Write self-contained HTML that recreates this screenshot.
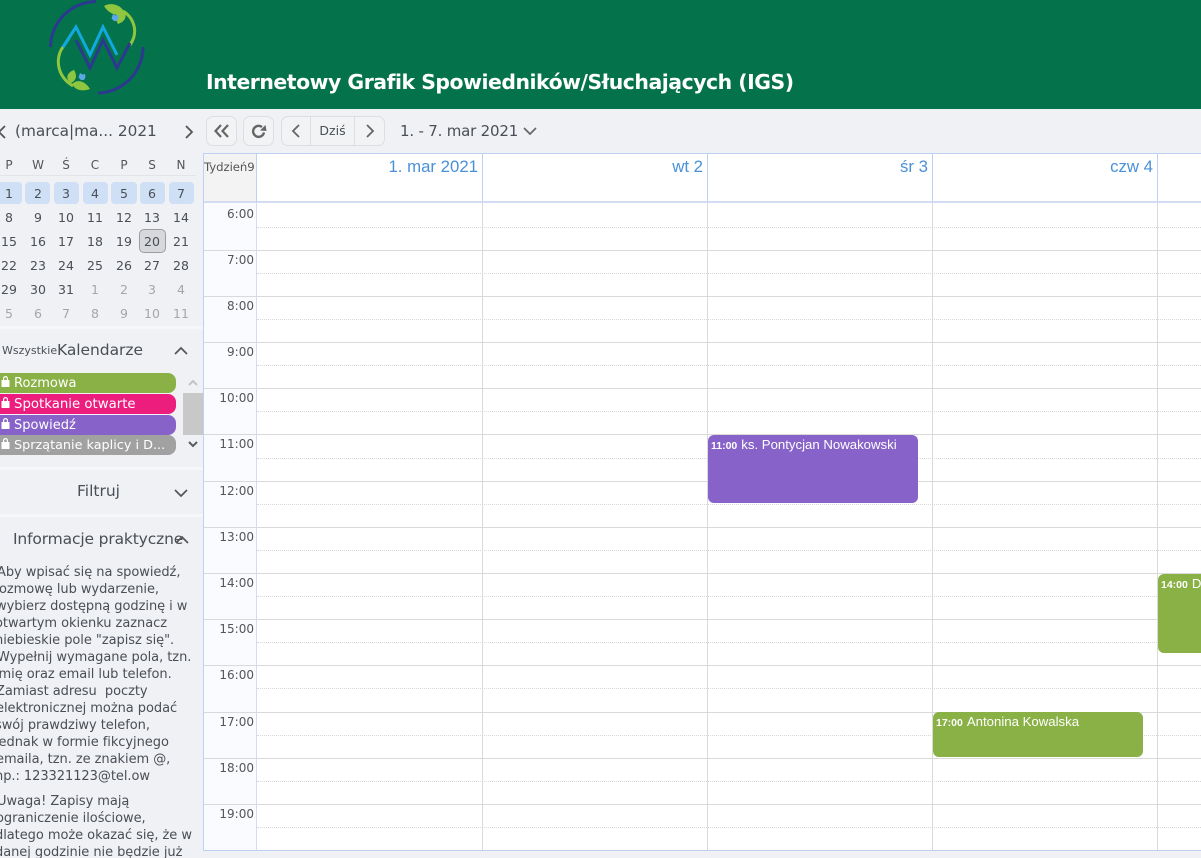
<!DOCTYPE html>
<html lang="pl"><head><meta charset="utf-8"><title>IGS</title>
<style>
html,body{margin:0;padding:0;width:1201px;height:858px;overflow:hidden;background:#eff1f5}
body{position:relative;font-family:"DejaVu Sans","Liberation Sans",sans-serif;color:#4a4f55}
div,span{position:absolute;white-space:nowrap;box-sizing:border-box}
#hd{left:0;top:0;width:1201px;height:109px;background:#04724a}
#ttl{left:206px;top:67px;font-size:20.4px;line-height:30px;font-weight:bold;color:#fff;letter-spacing:-.47px;font-family:"DejaVu Sans",sans-serif}
.wd{top:157px;width:28px;text-align:center;font-size:12px;line-height:16px;color:#555}
.chip{top:182px;height:22px;background:#cfdff6;border-radius:4px}
.d{width:28px;text-align:center;font-size:12.5px;line-height:16px;margin-top:1px;color:#4a4f55}
.m{color:#a3a6aa}
.c{left:-8px;width:184px;height:20px;border-radius:8px;color:#fff;font-size:13px;line-height:22px;padding-left:22px}
.sep{left:0;width:203px;height:3px;background:#f6f7f9}
.sec{font-size:15.5px;line-height:20px;color:#4a4f55}
.p{left:-3px;font-size:13px;line-height:17px;margin-top:1px;color:#4a4f55;letter-spacing:-.05px}
.btn{top:116px;height:30px;background:#f2f3f5;border:1px solid #dcdee2;border-radius:7px}
.hl{left:204px;width:997px;height:1px;background:#d9d9d9}
.dl{left:257px;width:944px;height:0;border-top:1px dotted #d8d8d8}
.vl{top:203px;width:1px;height:647px;background:#d9d9d9}
.hvl{top:154px;width:1px;height:48px;background:#bfd0f5}
.dh{top:157px;font-family:"Liberation Sans",sans-serif;font-size:16.8px;line-height:20px;color:#4a90d9;text-align:right}
.t{left:204px;width:50px;text-align:right;font-size:12px;line-height:16px;margin-top:1px;color:#555}
.ev{border-radius:6px;color:#fff;font-family:"Liberation Sans",sans-serif;font-size:13.2px;line-height:15px;padding:2px 3px;overflow:hidden}
.ev b{font-size:10.5px;margin-right:4px}
</style></head><body>

<div id="hd">
<svg width="160" height="100" viewBox="0 0 160 100" style="position:absolute;left:0;top:0" fill="none">
<path d="M96 1.500A46 46 0 0 0 50.500 47" stroke="#2b3a8f" stroke-width="3"/>
<path d="M143 47A46 46 0 0 1 98 93" stroke="#2b3a8f" stroke-width="3"/>
<path d="M123 11C134 18 139 32 130 45" stroke="#8ec63f" stroke-width="3"/>
<path d="M63 47C56 56 55 75 73 86" stroke="#8ec63f" stroke-width="3"/>
<path d="M63 47L69 38" stroke="#3fb8a8" stroke-width="3"/>
<path d="M104 6C110 2 122 4 125 14C116 17 108 13 104 6Z" fill="#8ec63f"/>
<path d="M118 24C113 16 118 10 125 12C127 18 124 22 118 24Z" fill="#8ec63f"/>
<path d="M72 84C78 78 86 82 90 89C82 92 75 90 72 84Z" fill="#8ec63f"/>
<path d="M71 83C64 78 68 72 74 70C77 75 77 80 71 83Z" fill="#8ec63f"/>
<path d="M113 14l2.500 1.500 2.500-.5 .5 3-1.500 3h-3l-2.500-2.500z" fill="#5aa9e6"/>
<path d="M80 73l2.500 1.500 2.500-.5 .5 3-1.500 3h-3l-2.500-2.500z" fill="#5aa9e6"/>
<path d="M76 40L90 68L103 40L117 68L130 43" stroke="#2b3a8f" stroke-width="3"/>
<path d="M63 47L76 27L90 55L103 27L117 55" stroke="#12a9e0" stroke-width="3"/>
</svg>
<div id="ttl">Internetowy Grafik Spowiedników/Słuchających (IGS)</div>
</div>

<!-- mini calendar -->
<svg width="10" height="14" style="position:absolute;left:-3px;top:125px" fill="none" stroke="#555" stroke-width="1.800"><path d="M8 1L2 7L8 13"/></svg>
<div style="left:15px;top:120px;font-size:15.300px;line-height:22px;color:#4a4f55">(marca|ma... 2021</div>
<svg width="10" height="14" style="position:absolute;left:184px;top:125px" fill="none" stroke="#555" stroke-width="1.800"><path d="M2 1L8 7L2 13"/></svg>

<div class="wd" style="left:-5px">P</div><div class="wd" style="left:24px">W</div><div class="wd" style="left:52px">Ś</div><div class="wd" style="left:81px">C</div><div class="wd" style="left:110px">P</div><div class="wd" style="left:138px">S</div><div class="wd" style="left:167px">N</div>
<div style="left:0;top:175px;width:196px;height:1px;background:#e2e4e7"></div>

<div class="chip" style="left:-4px;width:26px"></div><div class="chip" style="left:25px;width:25px"></div><div class="chip" style="left:54px;width:25px"></div><div class="chip" style="left:83px;width:25px"></div><div class="chip" style="left:111px;width:26px"></div><div class="chip" style="left:140px;width:25px"></div><div class="chip" style="left:169px;width:25px"></div>
<div style="left:139px;top:229px;width:27px;height:24px;background:#d6d8db;border:1px solid #9a9ea3;border-radius:5px"></div>

<div class="d" style="left:-5px;top:185px">1</div><div class="d" style="left:24px;top:185px">2</div><div class="d" style="left:52px;top:185px">3</div><div class="d" style="left:81px;top:185px">4</div><div class="d" style="left:110px;top:185px">5</div><div class="d" style="left:138px;top:185px">6</div><div class="d" style="left:167px;top:185px">7</div>
<div class="d" style="left:-5px;top:209px">8</div><div class="d" style="left:24px;top:209px">9</div><div class="d" style="left:52px;top:209px">10</div><div class="d" style="left:81px;top:209px">11</div><div class="d" style="left:110px;top:209px">12</div><div class="d" style="left:138px;top:209px">13</div><div class="d" style="left:167px;top:209px">14</div>
<div class="d" style="left:-5px;top:233px">15</div><div class="d" style="left:24px;top:233px">16</div><div class="d" style="left:52px;top:233px">17</div><div class="d" style="left:81px;top:233px">18</div><div class="d" style="left:110px;top:233px">19</div><div class="d" style="left:138px;top:233px">20</div><div class="d" style="left:167px;top:233px">21</div>
<div class="d" style="left:-5px;top:257px">22</div><div class="d" style="left:24px;top:257px">23</div><div class="d" style="left:52px;top:257px">24</div><div class="d" style="left:81px;top:257px">25</div><div class="d" style="left:110px;top:257px">26</div><div class="d" style="left:138px;top:257px">27</div><div class="d" style="left:167px;top:257px">28</div>
<div class="d" style="left:-5px;top:281px">29</div><div class="d" style="left:24px;top:281px">30</div><div class="d" style="left:52px;top:281px">31</div><div class="d m" style="left:81px;top:281px">1</div><div class="d m" style="left:110px;top:281px">2</div><div class="d m" style="left:138px;top:281px">3</div><div class="d m" style="left:167px;top:281px">4</div>
<div class="d m" style="left:-5px;top:305px">5</div><div class="d m" style="left:24px;top:305px">6</div><div class="d m" style="left:52px;top:305px">7</div><div class="d m" style="left:81px;top:305px">8</div><div class="d m" style="left:110px;top:305px">9</div><div class="d m" style="left:138px;top:305px">10</div><div class="d m" style="left:167px;top:305px">11</div>

<div class="sep" style="top:326px"></div>

<!-- Kalendarze -->
<div style="left:2px;top:343px;font-size:11px;line-height:15px;color:#4a4f55">Wszystkie</div>
<div class="sec" style="left:57px;top:340px;letter-spacing:-.05px">Kalendarze</div>
<svg width="14" height="9" style="position:absolute;left:174px;top:346px" fill="none" stroke="#555" stroke-width="1.700"><path d="M1 8L7 2L13 8"/></svg>

<div class="c" style="top:373px;background:#8ab146">Rozmowa</div>
<div class="c" style="top:394px;background:#ec1d7d;font-size:13.3px">Spotkanie otwarte</div>
<div class="c" style="top:415px;background:#8763c9">Spowiedź</div>
<div class="c" style="top:435px;background:#a1a1a1;font-size:12.8px">Sprzątanie kaplicy i D...</div>
<svg width="12" height="84" viewBox="0 0 12 84" style="position:absolute;left:0;top:374px" fill="#fff">
<path d="M1.500 6h8v7h-8zM3 6V4.500a2.500 2.500 0 0 1 5 0V6H6.800V4.500a1.300 1.300 0 0 0-2.600 0V6z"/>
<path d="M1.500 27h8v7h-8zM3 27V25.500a2.500 2.500 0 0 1 5 0V27H6.800V25.500a1.300 1.300 0 0 0-2.600 0V27z"/>
<path d="M1.500 48h8v7h-8zM3 48V46.500a2.500 2.500 0 0 1 5 0V48H6.800V46.500a1.300 1.300 0 0 0-2.600 0V48z"/>
<path d="M1.500 68h8v7h-8zM3 68V66.500a2.500 2.500 0 0 1 5 0V68H6.800V66.500a1.300 1.300 0 0 0-2.600 0V68z"/>
</svg>
<div style="left:183px;top:393px;width:20px;height:42px;background:#c8c8c8"></div>
<svg width="10" height="7" style="position:absolute;left:188px;top:379px" fill="none" stroke="#c2c4c6" stroke-width="2"><path d="M1 6L5 2L9 6"/></svg>
<svg width="10" height="7" style="position:absolute;left:188px;top:441px" fill="none" stroke="#5a5d60" stroke-width="2"><path d="M1 1L5 5L9 1"/></svg>

<div class="sep" style="top:467px"></div>
<div class="sec" style="left:77px;top:481px">Filtruj</div>
<svg width="14" height="9" style="position:absolute;left:174px;top:489px" fill="none" stroke="#555" stroke-width="1.700"><path d="M1 1L7 7L13 1"/></svg>
<div class="sep" style="top:514px"></div>
<div class="sec" style="left:13px;top:529px;letter-spacing:-.15px">Informacje praktyczne</div>
<svg width="14" height="9" style="position:absolute;left:175px;top:535px" fill="none" stroke="#555" stroke-width="1.700"><path d="M1 8L7 2L13 8"/></svg>

<div class="p" style="top:563px">Aby wpisać się na spowiedź,</div>
<div class="p" style="top:580px;left:-6px">rozmowę lub wydarzenie,</div>
<div class="p" style="top:597px;left:-4px">wybierz dostępną godzinę i w</div>
<div class="p" style="top:614px;left:-5px">otwartym okienku zaznacz</div>
<div class="p" style="top:631px;left:-5px">niebieskie pole "zapisz się".</div>
<div class="p" style="top:648px;left:-3px">Wypełnij wymagane pola, tzn.</div>
<div class="p" style="top:665px;left:-5px">imię oraz email lub telefon.</div>
<div class="p" style="top:682px;left:-4px">Zamiast adresu&nbsp; poczty</div>
<div class="p" style="top:699px;left:-4px">elektronicznej można podać</div>
<div class="p" style="top:716px;left:-5px">swój prawdziwy telefon,</div>
<div class="p" style="top:733px;left:-5px">jednak w formie fikcyjnego</div>
<div class="p" style="top:750px;left:-4px">emaila, tzn. ze znakiem @,</div>
<div class="p" style="top:767px;left:-5px">np.: 123321123@tel.ow</div>
<div class="p" style="top:792px;left:-3px">Uwaga! Zapisy mają</div>
<div class="p" style="top:809px;left:-4px">ograniczenie ilościowe,</div>
<div class="p" style="top:826px;left:-5px">dlatego może okazać się, że w</div>
<div class="p" style="top:843px;left:-5px">danej godzinie nie będzie już</div>

<!-- toolbar -->
<div class="btn" style="left:206px;width:31px"></div>
<svg width="16" height="14" style="position:absolute;left:214px;top:124px" fill="none" stroke="#666" stroke-width="2.200"><path d="M7 1L1.500 7L7 13M14 1L8.500 7L14 13"/></svg>
<div class="btn" style="left:243px;width:31px"></div>
<svg width="16" height="16" style="position:absolute;left:251px;top:123px" fill="none" stroke="#666" stroke-width="2.400"><path d="M13 9.500A5.500 5.500 0 1 1 11 4"/><path d="M9 7.500L15.500 8L14.500 2Z" fill="#666" stroke="none"/></svg>
<div class="btn" style="left:281px;width:104px"></div>
<div style="left:310px;top:116px;width:1px;height:30px;background:#dcdee2"></div>
<div style="left:354px;top:116px;width:1px;height:30px;background:#dcdee2"></div>
<svg width="10" height="14" style="position:absolute;left:291px;top:124px" fill="none" stroke="#666" stroke-width="1.800"><path d="M8 1L2 7L8 13"/></svg>
<div style="left:311px;top:122px;width:43px;text-align:center;font-size:12.500px;line-height:18px;color:#4a4f55">Dziś</div>
<svg width="10" height="14" style="position:absolute;left:365px;top:124px" fill="none" stroke="#666" stroke-width="1.800"><path d="M2 1L8 7L2 13"/></svg>
<div style="left:400px;top:120px;font-size:15px;line-height:22px;color:#4a4f55;letter-spacing:-.2px">1. - 7. mar 2021</div>
<svg width="14" height="9" style="position:absolute;left:523px;top:127px" fill="none" stroke="#666" stroke-width="1.700"><path d="M1 1L7 7L13 1"/></svg>

<!-- calendar grid -->
<div style="left:203px;top:153px;width:998px;height:698px;background:#fff;border:1px solid #bfd0f5;border-right:0"></div>
<div style="left:204px;top:154px;width:52px;height:48px;background:#f3f3f3"></div>
<div style="left:204px;top:203px;width:52px;height:647px;background:#f9fbff"></div>
<div style="left:204px;top:201px;width:997px;height:2px;background:#d3dcf0"></div>
<div class="hvl" style="left:256px"></div><div class="hvl" style="left:482px"></div><div class="hvl" style="left:707px"></div><div class="hvl" style="left:932px"></div><div class="hvl" style="left:1157px"></div>
<div style="left:204px;top:159px;width:52px;font-size:11.700px;line-height:16px;color:#555;letter-spacing:-.05px;overflow:hidden">Tydzień9</div>
<div class="dh" style="left:279px;width:199px">1. mar 2021</div>
<div class="dh" style="left:504px;width:199px">wt 2</div>
<div class="dh" style="left:729px;width:199px">śr 3</div>
<div class="dh" style="left:954px;width:199px">czw 4</div>

<div class="vl" style="left:256px;background:#d3dcf0"></div><div class="vl" style="left:482px"></div><div class="vl" style="left:707px"></div><div class="vl" style="left:932px"></div><div class="vl" style="left:1157px"></div>

<div class="dl" style="top:227px"></div><div class="dl" style="top:273px"></div><div class="dl" style="top:319px"></div><div class="dl" style="top:365px"></div><div class="dl" style="top:411px"></div><div class="dl" style="top:458px"></div><div class="dl" style="top:504px"></div><div class="dl" style="top:550px"></div><div class="dl" style="top:596px"></div><div class="dl" style="top:642px"></div><div class="dl" style="top:688px"></div><div class="dl" style="top:735px"></div><div class="dl" style="top:781px"></div><div class="dl" style="top:827px"></div>
<div class="hl" style="top:250px"></div><div class="hl" style="top:296px"></div><div class="hl" style="top:342px"></div><div class="hl" style="top:388px"></div><div class="hl" style="top:434px"></div><div class="hl" style="top:481px"></div><div class="hl" style="top:527px"></div><div class="hl" style="top:573px"></div><div class="hl" style="top:619px"></div><div class="hl" style="top:665px"></div><div class="hl" style="top:712px"></div><div class="hl" style="top:758px"></div><div class="hl" style="top:804px"></div>

<div class="t" style="top:205px">6:00</div><div class="t" style="top:251px">7:00</div><div class="t" style="top:297px">8:00</div><div class="t" style="top:343px">9:00</div><div class="t" style="top:389px">10:00</div><div class="t" style="top:435px">11:00</div><div class="t" style="top:482px">12:00</div><div class="t" style="top:528px">13:00</div><div class="t" style="top:574px">14:00</div><div class="t" style="top:620px">15:00</div><div class="t" style="top:666px">16:00</div><div class="t" style="top:713px">17:00</div><div class="t" style="top:759px">18:00</div><div class="t" style="top:805px">19:00</div>

<div class="ev" style="left:708px;top:435px;width:210px;height:68px;background:#8763c9"><b>11:00</b>ks. Pontycjan Nowakowski</div>
<div class="ev" style="left:933px;top:712px;width:210px;height:45px;background:#8ab146"><b>17:00</b>Antonina Kowalska</div>
<div class="ev" style="left:1158px;top:574px;width:60px;height:79px;background:#8ab146"><b>14:00</b>D</div>
</body></html>
